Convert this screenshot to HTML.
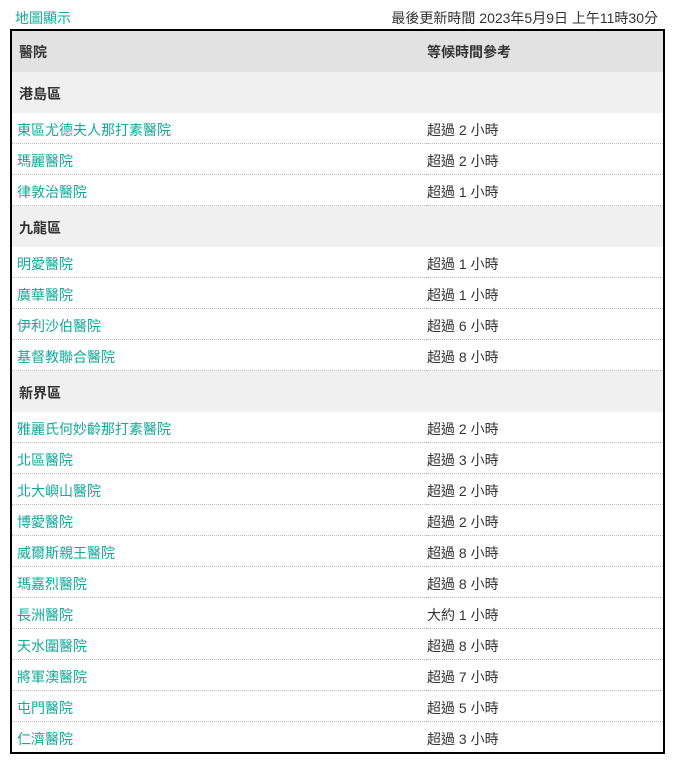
<!DOCTYPE html>
<html><head><meta charset="utf-8"><style>
body{margin:0;background:#fff;font-family:"Liberation Sans","Noto Sans CJK TC",sans-serif;font-size:14px;color:#333;}
.top{position:absolute;top:8px;left:15px;right:15px;height:18px;}
.top a{color:#12a89a;text-decoration:none;}
.top span{position:absolute;right:0;top:0;color:#333;}
table{position:absolute;left:10px;top:29px;width:655px;border:2px solid #000;border-collapse:collapse;box-sizing:border-box;}
td,th{padding:0;text-align:left;}
tr.h th{background:#e2e2e2;height:41px;font-weight:bold;}
tr.r td{background:#f0f0f0;height:39px;padding-top:2px;font-weight:bold;padding-left:7px;}
tr.d td{height:27px;padding-top:3px;border-bottom:1px dotted #bbb;}
tr.d td:first-child{color:#12a89a;padding-left:5px;}
th:first-child{padding-left:7px;}
.c2{width:236px;}
</style></head><body>
<div class="top"><a>地圖顯示</a><span>最後更新時間 2023年5月9日 上午11時30分</span></div>
<table>
<tr class="h"><th>醫院</th><th class="c2">等候時間參考</th></tr>
<tr class="r"><td colspan="2">港島區</td></tr>
<tr class="d"><td>東區尤德夫人那打素醫院</td><td>超過 2 小時</td></tr>
<tr class="d"><td>瑪麗醫院</td><td>超過 2 小時</td></tr>
<tr class="d"><td>律敦治醫院</td><td>超過 1 小時</td></tr>
<tr class="r"><td colspan="2">九龍區</td></tr>
<tr class="d"><td>明愛醫院</td><td>超過 1 小時</td></tr>
<tr class="d"><td>廣華醫院</td><td>超過 1 小時</td></tr>
<tr class="d"><td>伊利沙伯醫院</td><td>超過 6 小時</td></tr>
<tr class="d"><td>基督教聯合醫院</td><td>超過 8 小時</td></tr>
<tr class="r"><td colspan="2">新界區</td></tr>
<tr class="d"><td>雅麗氏何妙齡那打素醫院</td><td>超過 2 小時</td></tr>
<tr class="d"><td>北區醫院</td><td>超過 3 小時</td></tr>
<tr class="d"><td>北大嶼山醫院</td><td>超過 2 小時</td></tr>
<tr class="d"><td>博愛醫院</td><td>超過 2 小時</td></tr>
<tr class="d"><td>威爾斯親王醫院</td><td>超過 8 小時</td></tr>
<tr class="d"><td>瑪嘉烈醫院</td><td>超過 8 小時</td></tr>
<tr class="d"><td>長洲醫院</td><td>大約 1 小時</td></tr>
<tr class="d"><td>天水圍醫院</td><td>超過 8 小時</td></tr>
<tr class="d"><td>將軍澳醫院</td><td>超過 7 小時</td></tr>
<tr class="d"><td>屯門醫院</td><td>超過 5 小時</td></tr>
<tr class="d"><td>仁濟醫院</td><td>超過 3 小時</td></tr>
</table>
</body></html>
